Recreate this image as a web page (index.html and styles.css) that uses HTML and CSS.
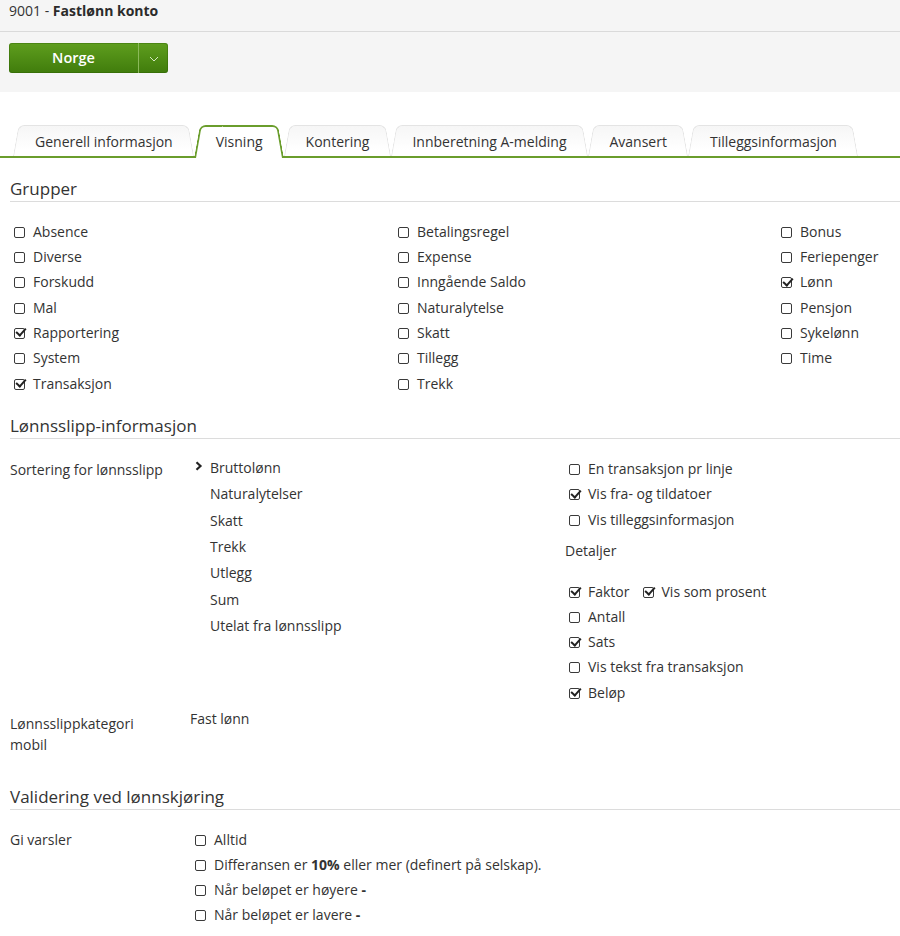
FILE: index.html
```html
<!DOCTYPE html>
<html lang="no">
<head>
<meta charset="utf-8">
<title>Fastlønn konto</title>
<link rel="stylesheet" href="styles.css">
</head>
<body>
<div class="top">
  <div class="title">9001 - <b>Fastlønn konto</b></div>
  <div class="btnbar">
    <div class="split">
      <span class="btn-main">Norge</span>
      <span class="btn-caret"><svg width="10" height="6" viewBox="0 0 10 6"><path d="M1 1l4 4 4-4" fill="none" stroke="#d6e8c2" stroke-width="1"/></svg></span>
    </div>
  </div>
</div>

<nav class="tabs">
  <div class="tab">Generell informasjon</div>
  <div class="tab active">Visning</div>
  <div class="tab">Kontering</div>
  <div class="tab">Innberetning A-melding</div>
  <div class="tab">Avansert</div>
  <div class="tab">Tilleggsinformasjon</div>
</nav>

<section class="sec">
  <h2 class="sec-h first">Grupper</h2>
  <div class="groups">
    <div class="col">
      <div class="row"><span class="cb"></span>Absence</div>
      <div class="row"><span class="cb"></span>Diverse</div>
      <div class="row"><span class="cb"></span>Forskudd</div>
      <div class="row"><span class="cb"></span>Mal</div>
      <div class="row"><span class="cb on"></span>Rapportering</div>
      <div class="row"><span class="cb"></span>System</div>
      <div class="row"><span class="cb on"></span>Transaksjon</div>
    </div>
    <div class="col">
      <div class="row"><span class="cb"></span>Betalingsregel</div>
      <div class="row"><span class="cb"></span>Expense</div>
      <div class="row"><span class="cb"></span>Inngående Saldo</div>
      <div class="row"><span class="cb"></span>Naturalytelse</div>
      <div class="row"><span class="cb"></span>Skatt</div>
      <div class="row"><span class="cb"></span>Tillegg</div>
      <div class="row"><span class="cb"></span>Trekk</div>
    </div>
    <div class="col">
      <div class="row"><span class="cb"></span>Bonus</div>
      <div class="row"><span class="cb"></span>Feriepenger</div>
      <div class="row"><span class="cb on"></span>Lønn</div>
      <div class="row"><span class="cb"></span>Pensjon</div>
      <div class="row"><span class="cb"></span>Sykelønn</div>
      <div class="row"><span class="cb"></span>Time</div>
    </div>
  </div>

  <h2 class="sec-h second">Lønnsslipp-informasjon</h2>
  <div class="payslip">
    <div class="label">Sortering for lønnsslipp</div>
    <div class="sortlist">
      <div class="sort-item"><span class="chev"><svg width="8" height="10" viewBox="0 0 8 10"><path d="M1.5 1.2l4 3.8-4 3.8" fill="none" stroke="#222" stroke-width="2.2"/></svg></span>Bruttolønn</div>
      <div class="sort-item"><span class="chev"></span>Naturalytelser</div>
      <div class="sort-item"><span class="chev"></span>Skatt</div>
      <div class="sort-item"><span class="chev"></span>Trekk</div>
      <div class="sort-item"><span class="chev"></span>Utlegg</div>
      <div class="sort-item"><span class="chev"></span>Sum</div>
      <div class="sort-item"><span class="chev"></span>Utelat fra lønnsslipp</div>
    </div>
    <div class="rblock">
      <div class="row r1"><span class="cb"></span>En transaksjon pr linje</div>
      <div class="row r1"><span class="cb on"></span>Vis fra- og tildatoer</div>
      <div class="row r1"><span class="cb"></span>Vis tilleggsinformasjon</div>
      <div class="detaljer">Detaljer</div>
      <div class="row r2"><span class="cb on"></span>Faktor<span class="cb on second-cb"></span>Vis som prosent</div>
      <div class="row r2"><span class="cb"></span>Antall</div>
      <div class="row r2"><span class="cb on"></span>Sats</div>
      <div class="row r2"><span class="cb"></span>Vis tekst fra transaksjon</div>
      <div class="row r2"><span class="cb on"></span>Beløp</div>
    </div>
  </div>

  <div class="mobile">
    <div class="label mlabel">Lønnsslippkategori mobil</div>
    <div class="mvalue">Fast lønn</div>
  </div>

  <h2 class="sec-h third">Validering ved lønnskjøring</h2>
  <div class="valid">
    <div class="label vlabel">Gi varsler</div>
    <div class="vlist">
      <div class="row rv"><span class="cb"></span>Alltid</div>
      <div class="row rv"><span class="cb"></span>Differansen er&nbsp;<b>10%</b>&nbsp;eller mer (definert på selskap).</div>
      <div class="row rv"><span class="cb"></span>Når beløpet er høyere&nbsp;<b>-</b></div>
      <div class="row rv"><span class="cb"></span>Når beløpet er lavere&nbsp;<b>-</b></div>
    </div>
  </div>
</section>
</body>
</html>
```

FILE: styles.css
```css
* { box-sizing: border-box; }

html, body {
  margin: 0;
  padding: 0;
  background: #fff;
}

body {
  font-family: "Open Sans", "Liberation Sans", sans-serif;
  font-size: 14px;
  color: #333;
}

/* header */
.top {
  background: #f5f5f5;
}

.title {
  height: 32px;
  padding: 0 9px;
  line-height: 22px;
  border-bottom: 1px solid #dadada;
  color: #333;
}

.title b {
  font-weight: 700;
  color: #2b2b2b;
}

.btnbar {
  padding: 11px 9px 19px;
}

.split {
  display: inline-flex;
  height: 30px;
  border-radius: 3px;
  overflow: hidden;
  background: linear-gradient(#5f9e1e, #407c0c);
  box-shadow: inset 0 0 0 1px rgba(40, 90, 0, 0.35);
}

.btn-main {
  width: 130px;
  line-height: 30px;
  text-align: center;
  color: #fff;
  font-weight: 600;
  font-size: 14.5px;
  border-right: 1px solid #8bb95a;
}

.btn-caret {
  width: 29px;
  display: flex;
  align-items: center;
  justify-content: center;
  padding-top: 2px;
}

/* tabs */
.tabs {
  display: flex;
  padding: 33px 0 0 13px;
  border-bottom: 2px solid #6a9d2c;
}

.tab {
  position: relative;
  z-index: 0;
  height: 31px;
  line-height: 33px;
  padding: 0 21.5px;
  white-space: nowrap;
  color: #333;
}

.tab:first-child {
  padding-left: 22px;
}

.tab::before,
.tab::after {
  content: "";
  position: absolute;
  top: 0;
  bottom: 0;
  width: 60%;
  border: 1px solid #e4e4e4;
  border-bottom: none;
  background: linear-gradient(#f6f6f6, #fff 80%);
  z-index: -1;
}

.tab::before {
  left: 0;
  border-right: none;
  border-radius: 6px 0 0 0;
  transform-origin: bottom left;
  transform: skewX(-10deg);
}

.tab::after {
  right: 0;
  border-left: none;
  border-radius: 0 6px 0 0;
  transform-origin: bottom right;
  transform: skewX(10deg);
}

.tab.active {
  z-index: 2;
}

.tab.active::before,
.tab.active::after {
  bottom: -2px;
  border-width: 2px;
  border-color: #6a9d2c;
  background: #fff;
}

/* sections */
.sec {
  margin-left: 10px;
}

.sec-h {
  margin: 0;
  font-size: 17px;
  font-weight: 400;
  line-height: 24px;
  color: #333;
  border-bottom: 1px solid #dcdcdc;
}

.sec-h.first { margin-top: 19px; }
.sec-h.second { margin-top: 18.4px; }
.sec-h.third { margin-top: 30px; }

.groups {
  display: grid;
  grid-template-columns: 384px 383px 1fr;
  margin-top: 16.5px;
}

.row {
  display: flex;
  align-items: center;
  height: 25.33px;
  white-space: nowrap;
}

.row b { font-weight: 700; }

.cb {
  position: relative;
  flex: none;
  width: 11px;
  height: 11px;
  margin: 2px 8px 0 4px;
  border: 1.2px solid #3a3a3a;
  border-radius: 2px;
  background: #fff;
}

.cb.on::after {
  content: "";
  position: absolute;
  left: 3px;
  top: -2.5px;
  width: 4px;
  height: 8px;
  border: solid #222;
  border-width: 0 2.2px 2.2px 0;
  transform: rotate(42deg);
}

.cb.second-cb {
  margin-left: 13px;
}

.label {
  line-height: 21px;
  color: #333;
}

/* lønnsslipp */
.payslip {
  display: grid;
  grid-template-columns: 180px 375px 1fr;
  margin-top: 15px;
}

.payslip .label {
  padding-top: 4.5px;
}

.sort-item {
  display: flex;
  align-items: center;
  height: 26.4px;
}

.chev {
  width: 20px;
  padding-left: 5px;
  display: flex;
  align-items: center;
  margin-top: -2px;
}

.rblock {
  padding-top: 1.25px;
}

.row.r1 { height: 25.5px; }
.row.r2 { height: 25.25px; }

.detaljer {
  line-height: 25.5px;
  margin: 6.5px 0 14.5px;
}

.mobile {
  display: grid;
  grid-template-columns: 180px 1fr;
  margin-top: 3.4px;
}

.mlabel {
  padding-top: 5px;
  width: 160px;
}

.mvalue {
  line-height: 21px;
}

/* validering */
.valid {
  display: grid;
  grid-template-columns: 181px 1fr;
  margin-top: 16.3px;
}

.vlabel {
  padding-top: 3px;
}

.row.rv { height: 25.3px; }
```
